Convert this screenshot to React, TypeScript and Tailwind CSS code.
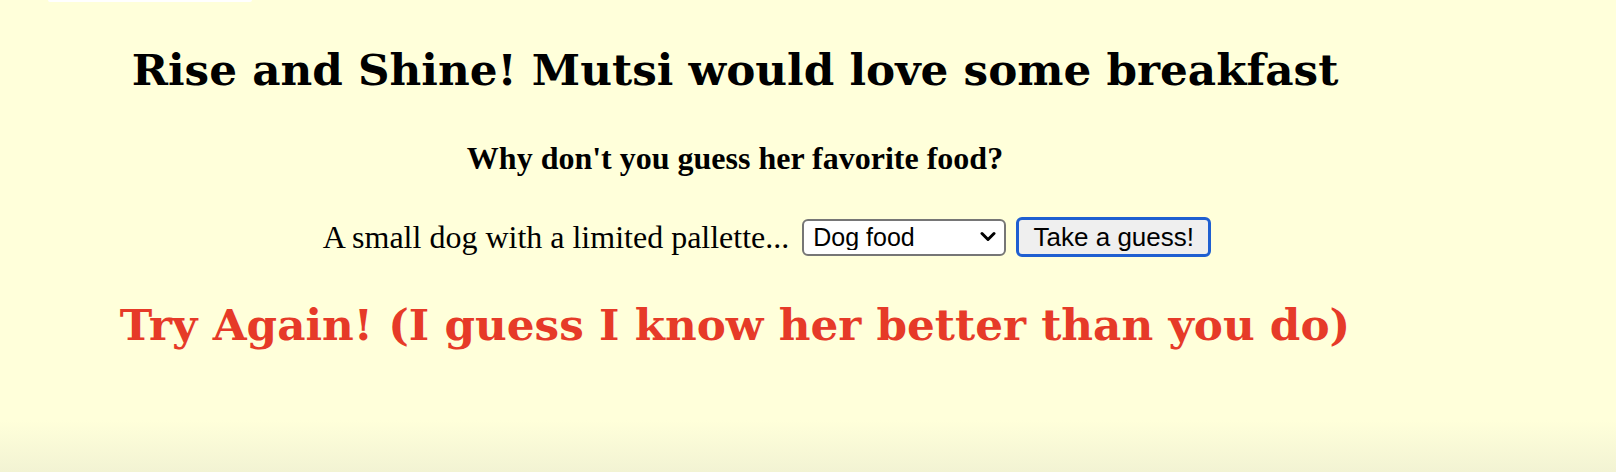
export default function App() {
  return (
    <div className="relative h-[472px] w-full overflow-hidden bg-[linear-gradient(to_bottom,#ffffda_0%,#ffffda_89%,#f2f3d3_100%)]">
      <div className="ml-[48px] h-[2px] w-[204px] rounded-b bg-white" />
      <div className="w-[1470px] text-center">
        <h2 className="mt-[43px] font-['DejaVu_Serif',serif] text-[43.7px] font-bold leading-[50px] text-black">
          Rise and Shine! Mutsi would love some breakfast
        </h2>
        <h4 className="mt-[46px] font-['Liberation_Serif',serif] text-[32px] font-bold leading-[35px] text-black">
          Why don't you guess her favorite food?
        </h4>
        <div className="mt-[41px] flex h-[40px] items-center justify-center pl-[64px]">
          <span className="font-['Liberation_Serif',serif] text-[32px] leading-[35px] text-black">
            A small dog with a limited pallette...
          </span>
          <div className="relative ml-[13px] h-[37px] w-[204px]">
            <select
              defaultValue="dog"
              className="h-full w-full appearance-none rounded-[6px] border-2 border-[#767676] bg-white pl-[9px] font-['Liberation_Sans',sans-serif] text-[25px] leading-none text-black outline-none"
            >
              <option value="dog">Dog food</option>
            </select>
            <svg
              className="pointer-events-none absolute right-[10px] top-[12px]"
              width="16"
              height="12"
              viewBox="0 0 16 12"
            >
              <path d="M2 2.5 L8 8.5 L14 2.5" fill="none" stroke="#000" strokeWidth="3" strokeLinecap="round" strokeLinejoin="round" />
            </svg>
          </div>
          <button className="ml-[10px] h-[40px] w-[195px] rounded-[6px] border-[3px] border-[#1f5fd1] bg-[#efefef] font-['Liberation_Sans',sans-serif] text-[26px] leading-none text-black">
            Take a guess!
          </button>
        </div>
        <h2 className="mt-[43px] font-['DejaVu_Serif',serif] text-[43.7px] font-bold leading-[50px] text-[#e63a28]">
          Try Again! (I guess I know her better than you do)
        </h2>
      </div>
    </div>
  );
}
